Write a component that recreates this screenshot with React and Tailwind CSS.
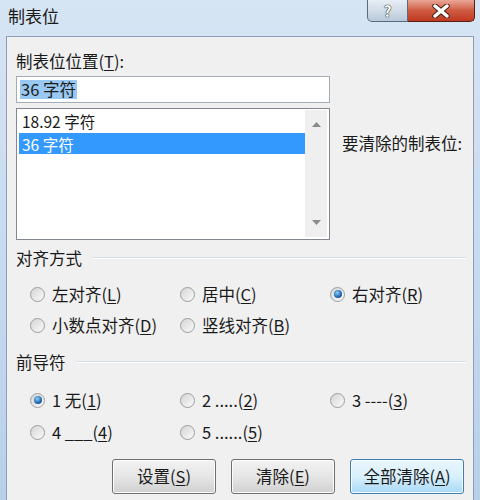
import React from "react";

const font = "font-['Noto_Sans_CJK_SC','Noto_Sans',sans-serif]";

function Radio({ checked, children }) {
	return (
		<div className="flex items-center gap-[7px] h-[20px]">
			<span className="w-[15px] h-[15px] rounded-full border border-[#9a9ea2] bg-gradient-to-br from-[#d4d4d4] to-[#fbfbfb] flex items-center justify-center shrink-0">
				{checked && (
					<span className="w-[8px] h-[8px] rounded-full bg-[radial-gradient(circle_at_40%_35%,#8fd0f7,#1d63ad_60%,#0f3f78)]" />
				)}
			</span>
			<span className="text-[16.5px] leading-[20px] text-[#1a1a1a] whitespace-nowrap">
				{children}
			</span>
		</div>
	);
}

function Key({ children }) {
	return <span className="underline underline-offset-2">{children}</span>;
}

function Group({ title }) {
	return (
		<div className="flex items-center gap-[10px] h-[20px]">
			<span className="text-[16.5px] leading-[20px] text-[#1a1a1a] whitespace-nowrap">
				{title}
			</span>
			<div className="flex-1 flex flex-col">
				<div className="h-px bg-[#d5dfe5]" />
				<div className="h-px bg-white" />
			</div>
		</div>
	);
}

function Button({ width, primary, children }) {
	return (
		<button
			className={`${width} h-[35px] rounded-[3px] border text-[16.5px] text-[#1a1a1a] shadow-[inset_0_0_0_1px_#fcfcfc] ${
				primary
					? "border-[#3c7fb1] bg-gradient-to-b from-[#eaf6fd] via-[#d9f0fc] to-[#a7d9f5]"
					: "border-[#707070] bg-gradient-to-b from-[#f2f2f2] via-[#e6e6e6] to-[#d0d0d0]"
			}`}
		>
			{children}
		</button>
	);
}

export default function App() {
	return (
		<div
			className={`w-[480px] h-[500px] overflow-hidden bg-gradient-to-b from-[#d6e5f4] to-[#b9d0ea] ${font}`}
		>
			{/* title bar */}
			<div className="h-[36px] flex justify-between items-start">
				<span className="ml-[8px] mt-[5px] text-[17px] leading-[22px] text-[#1a1a1a]">
					制表位
				</span>
				<div className="flex mr-[5px]">
					<div className="w-[41px] h-[22px] rounded-bl-[5px] border border-t-0 border-[#5c6b7c] bg-gradient-to-b from-[#e7eef6] via-[#d1dce8] to-[#b9c9da] flex items-center justify-center">
						<span className="text-[15px] font-bold leading-none text-white [text-shadow:0_0_1px_#333,0_0_1px_#333,0_0_1px_#333]">
							?
						</span>
					</div>
					<div className="w-[67px] h-[22px] rounded-br-[5px] border border-l-0 border-t-0 border-[#5a1f14] bg-gradient-to-b from-[#e9a696] via-[#cf5b43] to-[#c0381f] flex items-center justify-center">
						<svg width="20" height="14" viewBox="0 0 20 14">
							<path d="M4 2 L16 12 M16 2 L4 12" stroke="#4a2018" strokeWidth="5.5" strokeLinecap="round" />
							<path d="M4 2 L16 12 M16 2 L4 12" stroke="#ffffff" strokeWidth="3.5" strokeLinecap="round" />
						</svg>
					</div>
				</div>
			</div>

			{/* client area */}
			<div className="ml-[6px] w-[468px] h-[470px] border border-[#8e9fb3] bg-[#f0f0f0] pt-[14px] pl-[9px] pr-[7px]">
				<div className="text-[16.5px] leading-[20px] text-[#1a1a1a]">
					制表位位置(<Key>T</Key>):
				</div>
				<div className="mt-[5px] w-[314px] h-[27px] border border-[#a5acb5] bg-white flex items-center pl-[3px]">
					<span className="bg-[#99c9f3] text-[16.5px] leading-[19px] text-[#1a1a1a] px-px">
						36 字符
					</span>
				</div>

				<div className="mt-[5px] flex">
					<div className="w-[314px] h-[132px] border border-[#828790] bg-white flex p-[2px] pt-px">
						<div className="flex-1 flex flex-col">
							<div className="h-[23px] pt-[1px] leading-[20px] pl-[3px] text-[15.5px] text-[#1a1a1a]">
								18.92 字符
							</div>
							<div className="h-[21px] pt-[2px] leading-[19px] pl-[3px] text-[15.5px] text-white bg-[#3399ff]">
								36 字符
							</div>
						</div>
						<div className="w-[22px] bg-[#efefef] flex flex-col justify-between items-center py-[12px]">
							<svg width="9" height="5" viewBox="0 0 9 5">
								<path d="M0 5 L4.5 0 L9 5 Z" fill="#8a8a8a" />
							</svg>
							<svg width="9" height="5" viewBox="0 0 9 5">
								<path d="M0 0 L4.5 5 L9 0 Z" fill="#8a8a8a" />
							</svg>
						</div>
					</div>
					<div className="ml-[12px] mt-[25px] text-[16.5px] leading-[20px] text-[#1a1a1a] whitespace-nowrap">
						要清除的制表位:
					</div>
				</div>

				<div className="mt-[8px]">
					<Group title="对齐方式" />
				</div>
				<div className="pl-[14px] mt-[16px] grid grid-cols-[150px_150px_150px]">
					<Radio>
						左对齐(<Key>L</Key>)
					</Radio>
					<Radio>
						居中(<Key>C</Key>)
					</Radio>
					<Radio checked>
						右对齐(<Key>R</Key>)
					</Radio>
				</div>
				<div className="pl-[14px] mt-[11px] grid grid-cols-[150px_150px_150px]">
					<Radio>
						小数点对齐(<Key>D</Key>)
					</Radio>
					<Radio>
						竖线对齐(<Key>B</Key>)
					</Radio>
				</div>

				<div className="mt-[17px]">
					<Group title="前导符" />
				</div>
				<div className="pl-[14px] mt-[18px] grid grid-cols-[150px_150px_150px]">
					<Radio checked>
						1 无(<Key>1</Key>)
					</Radio>
					<Radio>
						2 .....(<Key>2</Key>)
					</Radio>
					<Radio>
						3 ----(<Key>3</Key>)
					</Radio>
				</div>
				<div className="pl-[14px] mt-[12px] grid grid-cols-[150px_150px_150px]">
					<Radio>
						4 ___(<Key>4</Key>)
					</Radio>
					<Radio>
						5 ......(<Key>5</Key>)
					</Radio>
				</div>

				<div className="mt-[17px] flex justify-end gap-[15px] pr-[2px]">
					<Button width="w-[104px]">
						设置(<Key>S</Key>)
					</Button>
					<Button width="w-[104px]">
						清除(<Key>E</Key>)
					</Button>
					<Button width="w-[114px]" primary>
						全部清除(<Key>A</Key>)
					</Button>
				</div>
			</div>
		</div>
	);
}
